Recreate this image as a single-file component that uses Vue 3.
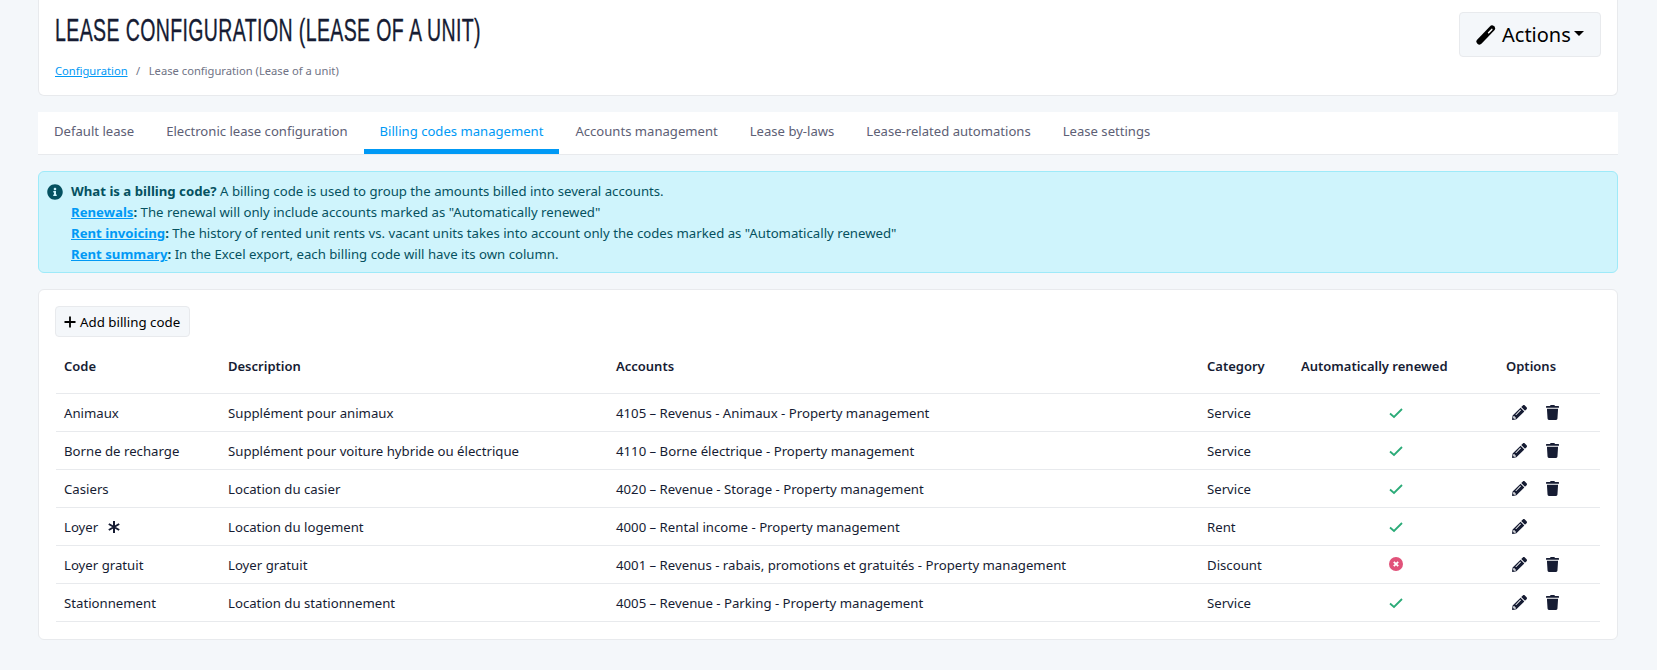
<script setup>
const tabs = ['Default lease', 'Electronic lease configuration', 'Billing codes management', 'Accounts management', 'Lease by-laws', 'Lease-related automations', 'Lease settings']
const rows = [
  { code: 'Animaux', desc: 'Supplément pour animaux', acc: '4105 – Revenus - Animaux - Property management', cat: 'Service', ok: true, del: true },
  { code: 'Borne de recharge', desc: 'Supplément pour voiture hybride ou électrique', acc: '4110 – Borne électrique - Property management', cat: 'Service', ok: true, del: true },
  { code: 'Casiers', desc: 'Location du casier', acc: '4020 – Revenue - Storage - Property management', cat: 'Service', ok: true, del: true },
  { code: 'Loyer', star: true, desc: 'Location du logement', acc: '4000 – Rental income - Property management', cat: 'Rent', ok: true, del: false },
  { code: 'Loyer gratuit', desc: 'Loyer gratuit', acc: '4001 – Revenus - rabais, promotions et gratuités - Property management', cat: 'Discount', ok: false, del: true },
  { code: 'Stationnement', desc: 'Location du stationnement', acc: '4005 – Revenue - Parking - Property management', cat: 'Service', ok: true, del: true }
]
const pencil = 'M497.9 142.1l-46.1 46.1c-4.7 4.7-12.3 4.7-17 0l-111-111c-4.7-4.7-4.7-12.3 0-17l46.1-46.1c18.7-18.7 49.1-18.7 67.9 0l60.1 60.1c18.8 18.7 18.8 49.1 0 67.9zM284.2 99.8L21.6 362.4.4 483.9c-2.9 16.4 11.4 30.6 27.8 27.8l121.5-21.3 262.6-262.6c4.7-4.7 4.7-12.3 0-17l-111-111c-4.8-4.7-12.4-4.7-17.1 0zM124.1 339.9c-5.5-5.5-5.5-14.3 0-19.8l154-154c5.5-5.5 14.3-5.5 19.8 0s5.5 14.3 0 19.8l-154 154c-5.5 5.5-14.3 5.5-19.8 0zM88 424h48v36.3l-64.5 11.3-31.1-31.1L51.7 376H88v48z'
const trash = 'M432 32H312l-9.4-18.7A24 24 0 0 0 281.1 0H166.8a23.72 23.72 0 0 0-21.4 13.3L136 32H16A16 16 0 0 0 0 48v32a16 16 0 0 0 16 16h416a16 16 0 0 0 16-16V48a16 16 0 0 0-16-16zM53.2 467a48 48 0 0 0 47.9 45h245.8a48 48 0 0 0 47.9-45L416 128H32z'
const info = 'M256 8C119 8 8 119.1 8 256c0 137 111 248 248 248s248-111 248-248C504 119.1 393 8 256 8zm0 110c23.2 0 42 18.8 42 42s-18.8 42-42 42-42-18.8-42-42 18.8-42 42-42zm56 254c0 6.6-5.4 12-12 12h-88c-6.6 0-12-5.4-12-12v-24c0-6.6 5.4-12 12-12h12v-64h-12c-6.6 0-12-5.4-12-12v-24c0-6.6 5.4-12 12-12h64c6.6 0 12 5.4 12 12v100h12c6.6 0 12 5.4 12 12v24z'
</script>

<template>
  <div class="page">
    <header class="card head">
      <div>
        <h1>Lease configuration (Lease of a unit)</h1>
        <nav class="crumb"><a href="#">Configuration</a><span class="sep">/</span><span>Lease configuration (Lease of a unit)</span></nav>
      </div>
      <button class="btn big">
        <svg class="wand" viewBox="0 0 20 20">
          <path d="M3.500 16.500 16 3.500" stroke="#000" stroke-width="6" stroke-linecap="round" fill="none"/>
          <path d="M12.600 7.800 15.800 4.400" stroke="#fff" stroke-width="1.500" stroke-linecap="round" fill="none"/>
        </svg>
        <span>Actions</span><i class="caret"></i>
      </button>
    </header>

    <div class="tabs">
      <a v-for="(t, i) in tabs" :key="t" href="#" class="tab" :class="{ active: i === 2 }">{{ t }}</a>
    </div>

    <div class="alert">
      <svg class="info" viewBox="0 0 512 512"><path :d="info" fill="#055160"/></svg>
      <div>
        <div><b>What is a billing code?</b> A billing code is used to group the amounts billed into several accounts.</div>
        <div><b><a href="#">Renewals</a>:</b> The renewal will only include accounts marked as "Automatically renewed"</div>
        <div><b><a href="#">Rent invoicing</a>:</b> The history of rented unit rents vs. vacant units takes into account only the codes marked as "Automatically renewed"</div>
        <div><b><a href="#">Rent summary</a>:</b> In the Excel export, each billing code will have its own column.</div>
      </div>
    </div>

    <section class="card body">
      <button class="btn add">
        <svg class="plus" viewBox="0 0 12 12"><path d="M6 .5v11M.5 6h11" stroke="#000" stroke-width="1.800" fill="none"/></svg>
        <span>Add billing code</span>
      </button>
      <table>
        <colgroup>
          <col class="c1" /><col class="c2" /><col class="c3" /><col class="c4" /><col class="c5" /><col class="c6" />
        </colgroup>
        <thead>
          <tr><th>Code</th><th>Description</th><th>Accounts</th><th>Category</th><th>Automatically renewed</th><th>Options</th></tr>
        </thead>
        <tbody>
          <tr v-for="r in rows" :key="r.code">
            <td class="txt">{{ r.code }}<svg v-if="r.star" class="star" viewBox="0 0 14 14"><path d="M7 1v12M1.800 4l10.400 6M12.200 4 1.800 10" stroke="#161c33" stroke-width="2" fill="none"/></svg></td>
            <td class="txt">{{ r.desc }}</td>
            <td class="txt">{{ r.acc }}</td>
            <td class="txt">{{ r.cat }}</td>
            <td class="state">
              <svg v-if="r.ok" class="check" viewBox="0 0 14 12"><path d="M1 6.500 5 10 13 2" stroke="#2bab78" stroke-width="1.800" fill="none"/></svg>
              <svg v-else class="cross" viewBox="0 0 14 14"><circle cx="7" cy="7" r="7" fill="#e1527a"/><path d="M4.800 4.800l4.400 4.400M9.200 4.800 4.800 9.200" stroke="#fff" stroke-width="1.800"/></svg>
            </td>
            <td class="optcell">
              <div class="ops">
                <svg class="pen" viewBox="0 0 512 512"><path :d="pencil" fill="#161c33"/></svg>
                <svg v-if="r.del" class="bin" viewBox="0 0 448 512"><path :d="trash" fill="#161c33"/></svg>
              </div>
            </td>
          </tr>
        </tbody>
      </table>
    </section>
  </div>
</template>

<style>
html, body { margin: 0; background: #f4f7fa; }
</style>

<style scoped>
.page {
  box-sizing: border-box;
  height: 670px;
  overflow: hidden;
  padding: 0 39px 0 38px;
  font-family: "Noto Sans", "Open Sans", sans-serif;
  font-size: 13.2px;
  color: #161c33;
  background: #f4f7fa;
}
a { color: #0099f5; }
.card {
  background: #fff;
  border: 1px solid #e8eaed;
  border-radius: 6px;
  box-sizing: border-box;
}
.head {
  height: 96px;
  border-top: 0;
  border-radius: 0 0 6px 6px;
  display: flex;
  justify-content: space-between;
  padding: 12px 16px 0 16px;
}
h1 {
  margin: 0;
  font-family: "Liberation Sans", sans-serif;
  font-weight: 400;
  font-size: 31px;
  line-height: 38px;
  text-transform: uppercase;
  letter-spacing: 0.6px;
  color: #161c33;
  white-space: nowrap;
  transform: scaleX(0.63);
  transform-origin: left center;
  -webkit-text-stroke: 0.35px #161c33;
  width: 430px;
}
.crumb {
  margin-top: 13px;
  font-size: 11.2px;
  line-height: 16px;
  color: #6f7385;
}
.sep { margin: 0 8.500px; }
.btn {
  font-family: inherit;
  color: #000;
  background: #f4f7fa;
  border: 1px solid #e8eaed;
  border-radius: 4px;
  display: flex;
  align-items: center;
  cursor: pointer;
}
.big {
  width: 142px;
  height: 45px;
  font-size: 20px;
  padding: 0 0 0 16px;
}
.wand { width: 20px; height: 20px; margin-right: 6px; flex: none; }
.caret {
  margin-left: 3px;
  margin-top: -3px;
  border: 5.500px solid transparent;
  border-top-color: #000;
  border-bottom: 0;
}
.tabs {
  margin-top: 16px;
  height: 43px;
  box-sizing: border-box;
  background: #fff;
  border-bottom: 1px solid #e8eaed;
  display: flex;
  font-size: 13.1px;
}
.tab {
  padding: 1px 16px 0;
  line-height: 37px;
  height: 42px;
  box-sizing: border-box;
  color: #5d6075;
  text-decoration: none;
}
.tab.active {
  color: #0099f5;
  border-bottom: 5px solid #0099f5;
}
.alert {
  margin-top: 16px;
  box-sizing: border-box;
  height: 102px;
  display: flex;
  gap: 8px;
  padding: 9px 8px;
  line-height: 21px;
  font-size: 13.2px;
  background: #cff4fc;
  border: 1px solid #9eeaf9;
  border-radius: 6px;
  color: #055160;
}
.info { width: 16px; height: 16px; margin-top: 3px; flex: none; }
.alert b { font-weight: 700; }
.body {
  margin-top: 16px;
  height: 351px;
  padding: 16px 16px 0 16px;
}
.add {
  width: 135px;
  height: 31px;
  font-size: 13.3px;
  padding: 0 0 0 8px;
  gap: 4px;
}
.plus { width: 12px; height: 12px; flex: none; }
table {
  margin-top: 3px;
  margin-left: 1px;
  width: 1544px;
  table-layout: fixed;
  border-collapse: collapse;
}
.c1 { width: 164px; }
.c2 { width: 388px; }
.c3 { width: 591px; }
.c4 { width: 94px; }
.c5 { width: 205px; }
.c6 { width: 102px; }
th {
  height: 53px;
  padding: 0 8px;
  text-align: left;
  font-weight: 600;
  font-size: 13px;
  border-bottom: 1px solid #e8eaed;
  box-sizing: border-box;
}
td {
  height: 38px;
  padding: 0 8px;
  border-bottom: 1px solid #e8eaed;
  box-sizing: border-box;
  white-space: nowrap;
}
.txt { padding-top: 2px; }
.state { text-align: center; padding-bottom: 1px; }
.state svg { display: inline-block; vertical-align: middle; }
.check { width: 14px; height: 12px; }
.cross { width: 14px; height: 14px; margin-bottom: 2px; }
.star { width: 14px; height: 14px; margin-left: 9px; vertical-align: -2px; }
.optcell { padding-top: 1px; }
.ops { display: flex; align-items: center; padding-left: 6px; }
.pen { width: 15px; height: 15px; }
.bin { width: 13px; height: 15px; margin-left: 19px; }
</style>
